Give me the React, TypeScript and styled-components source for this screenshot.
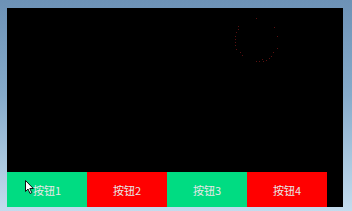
import styled, { createGlobalStyle } from 'styled-components';

const GlobalStyle = createGlobalStyle`
  html, body {
    margin: 0;
    padding: 0;
    width: 352px;
    height: 211px;
    overflow: hidden;
  }
  body {
    background: linear-gradient(180deg, #6d92b6 0%, #86abcb 45%, #aecbe2 80%, #c4dcee 100%);
    font-family: "Noto Sans CJK SC", "Liberation Sans", sans-serif;
  }
`;

const Desktop = styled.div`
  position: relative;
  width: 352px;
  height: 211px;
  padding: 8px 9px 4px 7px;
  box-sizing: border-box;
`;

const Panel = styled.div`
  width: 336px;
  height: 199px;
  background: #000;
  display: flex;
  flex-direction: column;
`;

const Stage = styled.div`
  flex: 1;
  position: relative;
`;

const ButtonBar = styled.div`
  height: 35px;
  display: flex;
`;

const BarButton = styled.button<{ $tone: 'green' | 'red' }>`
  width: 80px;
  height: 35px;
  border: 0;
  margin: 0;
  padding: 0;
  background: ${(p) => (p.$tone === 'green' ? '#00dc82' : '#ff0000')};
  color: #e8e8e8;
  font-family: "Noto Sans CJK SC", "Liberation Sans", sans-serif;
  font-size: 11px;
  display: flex;
  align-items: center;
  justify-content: center;
`;

const Spinner = styled.svg`
  position: absolute;
  left: 220px;
  top: 0;
`;

const Cursor = styled.svg`
  position: absolute;
  left: 25px;
  top: 180px;
`;

// dot positions in page coordinates
const dots = [
  [256, 18], [238, 26], [238, 29], [236, 32], [235, 36], [235, 39], [235, 42], [235, 45],
  [236, 49], [240, 52], [242, 55], [256, 61], [259, 61], [262, 59], [263, 61], [266, 60],
  [269, 58], [271, 56], [273, 52], [277, 48], [277, 36], [274, 27],
];

const buttons: { label: string; tone: 'green' | 'red' }[] = [
  { label: '按钮1', tone: 'green' },
  { label: '按钮2', tone: 'red' },
  { label: '按钮3', tone: 'green' },
  { label: '按钮4', tone: 'red' },
];

const App = () => (
  <Desktop>
    <GlobalStyle />
    <Panel>
      <Stage>
        <Spinner width='70' height='70' viewBox='0 0 70 70'>
          {dots.map(([x, y], i) => (
            <rect key={i} x={x - 227} y={y - 8} width='1' height='1' fill='#5a1010' />
          ))}
        </Spinner>
      </Stage>
      <ButtonBar>
        {buttons.map((b) => (
          <BarButton key={b.label} type='button' $tone={b.tone}>
            {b.label}
          </BarButton>
        ))}
      </ButtonBar>
    </Panel>
    <Cursor width='10' height='15' viewBox='0 0 10 15'>
      <path d='M0.5 0.5 L0.5 11.5 L3 9 L5 13.5 L6.8 12.7 L4.8 8.5 L8.3 8.5 Z' fill='#fff' stroke='#111' strokeWidth='1' />
    </Cursor>
  </Desktop>
);

export default App;
